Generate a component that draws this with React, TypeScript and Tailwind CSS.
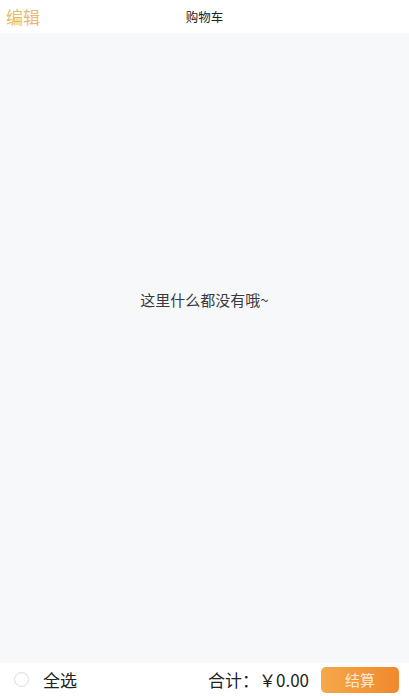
export default function App() {
  const font = { fontFamily: '"Noto Sans CJK SC", "Noto Sans", sans-serif' };
  return (
    <div className="flex h-[696px] w-[409px] flex-col bg-[#f7f8fa]" style={font}>
      <div className="relative flex h-[33px] shrink-0 items-center bg-white px-[6px]">
        <span className="text-[17px] leading-none text-[#e9b872]">编辑</span>
        <span className="absolute left-1/2 top-1/2 -translate-x-1/2 -translate-y-1/2 text-[12.5px] leading-none text-[#222]">购物车</span>
      </div>
      <div className="flex flex-1 items-center justify-center pb-[98px]">
        <span className="text-[15px] leading-none text-[#3a3a3a]">这里什么都没有哦~</span>
      </div>
      <div className="flex h-[33px] shrink-0 items-center bg-white pl-[14px] pr-[10px]">
        <span className="h-[15px] w-[15px] rounded-full border border-[#dcdcdc]" />
        <span className="ml-[14px] text-[17px] leading-none text-[#222]">全选</span>
        <span className="ml-auto text-[17px] leading-none text-[#222]">合计：￥0.00</span>
        <button className="ml-[12px] flex h-[26px] w-[78px] items-center justify-center rounded-[5px] bg-gradient-to-r from-[#f4a94a] to-[#f0882c] text-[15px] leading-none text-[#fde9d2]">结算</button>
      </div>
    </div>
  );
}
